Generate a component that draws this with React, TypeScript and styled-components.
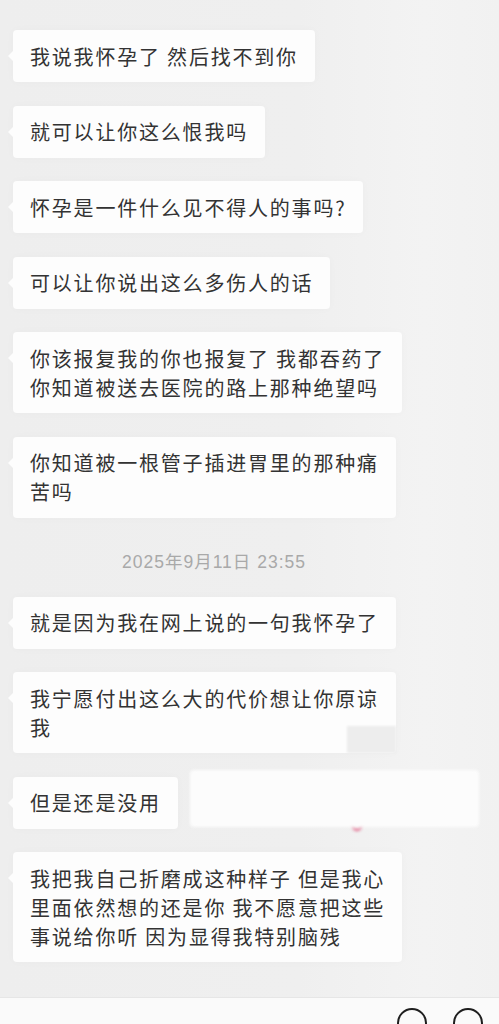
import React from "react"
import styled, { createGlobalStyle } from "styled-components"

const GlobalStyle = createGlobalStyle`
  html, body {
    margin: 0;
    padding: 0;
    background: #efefef;
  }
  body {
    font-family: "Noto Sans CJK SC", "Noto Sans", sans-serif;
    -webkit-font-smoothing: antialiased;
  }
`

type Item =
  | { kind: "msg"; lines: string[]; cut?: boolean; patch?: boolean }
  | { kind: "time"; text: string }

const items: Item[] = [
  { kind: "msg", lines: ["我说我怀孕了 然后找不到你"] },
  { kind: "msg", lines: ["就可以让你这么恨我吗"] },
  { kind: "msg", lines: ["怀孕是一件什么见不得人的事吗?"] },
  { kind: "msg", lines: ["可以让你说出这么多伤人的话"] },
  { kind: "msg", lines: ["你该报复我的你也报复了 我都吞药了", "你知道被送去医院的路上那种绝望吗"] },
  { kind: "msg", lines: ["你知道被一根管子插进胃里的那种痛", "苦吗"] },
  { kind: "time", text: "2025年9月11日 23:55" },
  { kind: "msg", lines: ["就是因为我在网上说的一句我怀孕了"] },
  { kind: "msg", lines: ["我宁愿付出这么大的代价想让你原谅", "我"], cut: true },
  { kind: "msg", lines: ["但是还是没用"], patch: true },
  {
    kind: "msg",
    lines: ["我把我自己折磨成这种样子 但是我心", "里面依然想的还是你 我不愿意把这些", "事说给你听 因为显得我特别脑残"],
  },
]

export default function App() {
  return (
    <S.Page>
      <GlobalStyle />
      <S.List>
        {items.map((item, index) =>
          item.kind === "time" ? (
            <S.Time key={index}>{item.text}</S.Time>
          ) : (
            <S.Row key={index}>
              <S.Bubble>
                {item.lines.map((line, i) => (
                  <S.Line key={i}>{line}</S.Line>
                ))}
                {item.cut && <S.Notch />}
              </S.Bubble>
              {item.patch && (
                <S.Smudge>
                  <S.Mark />
                </S.Smudge>
              )}
            </S.Row>
          )
        )}
      </S.List>
      <S.InputBar>
        <S.RoundIcon />
        <S.RoundIcon />
      </S.InputBar>
    </S.Page>
  )
}

const S = {
  Page: styled.div`
    width: 499px;
    height: 1024px;
    overflow: hidden;
    display: flex;
    flex-direction: column;
    background: linear-gradient(90deg, #eeeeee 0%, #efefef 60%, #f3f3f3 85%, #f1f1f1 100%);
  `,

  List: styled.div`
    flex: 1;
    display: flex;
    flex-direction: column;
    gap: 23.5px;
    padding: 30px 0 0 13px;
  `,

  Row: styled.div`
    display: flex;
    align-items: flex-start;
    gap: 12px;
  `,

  Bubble: styled.div`
    position: relative;
    background: #fdfdfd;
    border-radius: 4px;
    padding: 11.5px 17px 11.5px 17px;
    color: #333333;
    font-size: 20px;
    letter-spacing: 1.8px;
    line-height: 29px;
    box-shadow: 0 0 10px rgba(0, 0, 0, 0.025);

    &::before {
      content: "";
      position: absolute;
      left: -5px;
      top: 21px;
      border-top: 5px solid transparent;
      border-bottom: 5px solid transparent;
      border-right: 5px solid #fdfdfd;
    }
  `,

  Line: styled.div`
    white-space: nowrap;
  `,

  Notch: styled.div`
    position: absolute;
    right: 0;
    bottom: 0;
    width: 49px;
    height: 27px;
    background: #ededed;
    filter: blur(0.8px);
  `,

  Smudge: styled.div`
    position: relative;
    width: 289px;
    height: 57px;
    margin-top: -7px;
    background: #fcfcfc;
    border-radius: 4px;
    filter: blur(1.5px);
  `,

  Mark: styled.div`
    position: absolute;
    left: 162px;
    bottom: -4px;
    width: 10px;
    height: 4px;
    border-bottom: 2px solid #e0507a;
    border-radius: 0 0 6px 6px;
  `,

  Time: styled.div`
    margin: 11px 0 1px 109px;
    height: 20px;
    color: #a9a9a9;
    font-family: "Liberation Sans", "Noto Sans CJK SC", sans-serif;
    font-size: 17.5px;
    line-height: 20px;
    letter-spacing: 1px;
  `,

  InputBar: styled.div`
    height: 27px;
    border-top: 1px solid #e6e6e6;
    background: #fafafa;
    display: flex;
    justify-content: flex-end;
    align-items: flex-start;
    gap: 26px;
    padding: 10px 16px 0 0;
    box-sizing: border-box;
  `,

  RoundIcon: styled.div`
    width: 26px;
    height: 26px;
    border: 2.5px solid #1e1e1e;
    border-radius: 50%;
    flex-shrink: 0;
  `,
}
